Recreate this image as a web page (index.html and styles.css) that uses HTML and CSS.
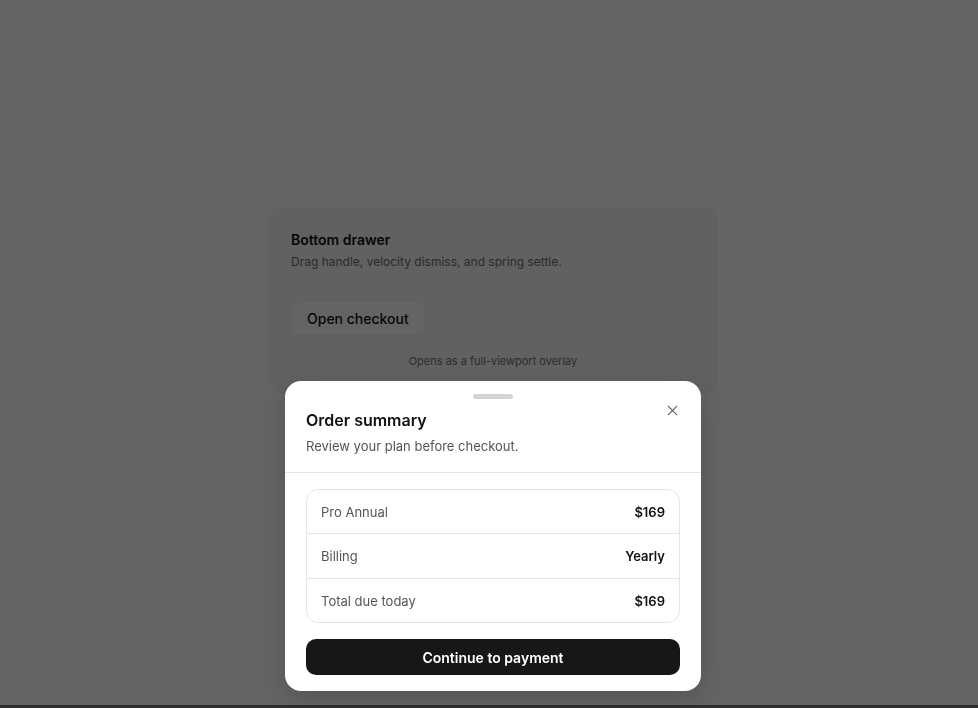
FILE: index.html
```html
<!DOCTYPE html>
<html lang="en">
<head>
<meta charset="utf-8">
<title>Bottom drawer</title>
<link rel="stylesheet" href="styles.css">
</head>
<body>
<main class="page">
  <section class="card">
    <h2 class="card-title">Bottom drawer</h2>
    <p class="card-sub">Drag handle, velocity dismiss, and spring settle.</p>
    <hr class="card-divider">
    <button class="btn-open" type="button">Open checkout</button>
    <p class="card-note">Opens as a full-viewport overlay</p>
  </section>
</main>
<div class="overlay">
  <div class="drawer" role="dialog" aria-label="Order summary">
    <div class="handle"></div>
    <header class="drawer-head">
      <h3 class="drawer-title">Order summary</h3>
      <p class="drawer-sub">Review your plan before checkout.</p>
      <button class="close" type="button" aria-label="Close">
        <svg width="12" height="12" viewBox="0 0 12 12"><path d="M1.5 1.5l9 9M10.5 1.5l-9 9" stroke="#5c5c5c" stroke-width="1.3" stroke-linecap="round" fill="none"/></svg>
      </button>
    </header>
    <div class="drawer-body">
      <div class="summary">
        <div class="row"><span class="label">Pro Annual</span><span class="value">$169</span></div>
        <div class="row"><span class="label">Billing</span><span class="value">Yearly</span></div>
        <div class="row"><span class="label">Total due today</span><span class="value">$169</span></div>
      </div>
      <button class="btn-pay" type="button">Continue to payment</button>
    </div>
  </div>
  <div class="strip"></div>
</div>
</body>
</html>
```
FILE: styles.css
```css
* { box-sizing: border-box; }
html, body { margin: 0; height: 100%; }
body {
  background: #fafafa;
  font-family: Inter, "Noto Sans", "Liberation Sans", sans-serif;
  color: #111;
  overflow: hidden;
}
.page {
  display: flex;
  justify-content: center;
  padding: 208px 0 0 8px;
}
.card {
  width: 448px;
  background: #f3f3f4;
  border: 1px solid #e9e9ea;
  border-radius: 14px;
  padding: 22px 21px 23px;
}
.card-title {
  margin: 0;
  font-size: 14px;
  line-height: 18px;
  font-weight: 600;
  color: #111;
}
.card-sub {
  margin: 4px 0 0;
  font-size: 12px;
  line-height: 18px;
  color: #6a6a6a;
}
.card-divider {
  margin: 12px 0 0;
  border: 0;
  border-top: 1px solid #ebebeb;
}
.btn-open {
  margin-top: 17px;
  height: 35px;
  padding: 0 15px;
  background: #fafafa;
  border: 1px solid #ededed;
  border-radius: 8px;
  font-family: inherit;
  font-size: 14px;
  font-weight: 500;
  color: #111;
}
.card-note {
  margin: 17px 0 0;
  text-align: center;
  font-size: 11px;
  line-height: 16px;
  color: #6f6f6f;
}
.overlay {
  position: fixed;
  inset: 0;
  background: rgba(0, 0, 0, 0.6);
  display: flex;
  flex-direction: column;
  align-items: center;
  justify-content: flex-end;
}
.drawer {
  position: relative;
  width: 416px;
  margin: 0 0 14px 8px;
  background: #fff;
  border-radius: 16px;
  box-shadow: 0 8px 30px rgba(0, 0, 0, 0.18);
}
.handle {
  width: 40px;
  height: 5px;
  margin: 13px auto 0;
  border-radius: 3px;
  background: #d4d4d4;
}
.drawer-head {
  padding: 10px 21px 17px;
  border-bottom: 1px solid #e5e5e5;
}
.drawer-title {
  margin: 0;
  font-size: 16px;
  line-height: 22px;
  font-weight: 600;
  color: #111;
}
.drawer-sub {
  margin: 6px 0 0;
  font-size: 13px;
  line-height: 18px;
  color: #555;
}
.close {
  position: absolute;
  top: 17px;
  right: 17px;
  width: 24px;
  height: 24px;
  padding: 0;
  border: 0;
  background: transparent;
  display: flex;
  align-items: center;
  justify-content: center;
}
.close svg { width: 11px; height: 11px; }
.drawer-body {
  padding: 16px 21px 16px;
}
.summary {
  border: 1px solid #e5e5e5;
  border-radius: 12px;
}
.row {
  height: 43px;
  display: flex;
  align-items: center;
  justify-content: space-between;
  padding: 0 14px;
  font-size: 13px;
}
.row + .row { border-top: 1px solid #e5e5e5; height: 45px; }
.row + .row:last-child { height: 44px; }
.label { color: #555; }
.value { font-weight: 600; color: #111; }
.btn-pay {
  display: block;
  width: 100%;
  height: 36px;
  margin-top: 16px;
  border: 0;
  border-radius: 10px;
  background: #171717;
  color: #fff;
  font-family: inherit;
  font-size: 14px;
  font-weight: 600;
}
.strip {
  align-self: stretch;
  height: 3px;
  background: #2f2f2f;
}
```
